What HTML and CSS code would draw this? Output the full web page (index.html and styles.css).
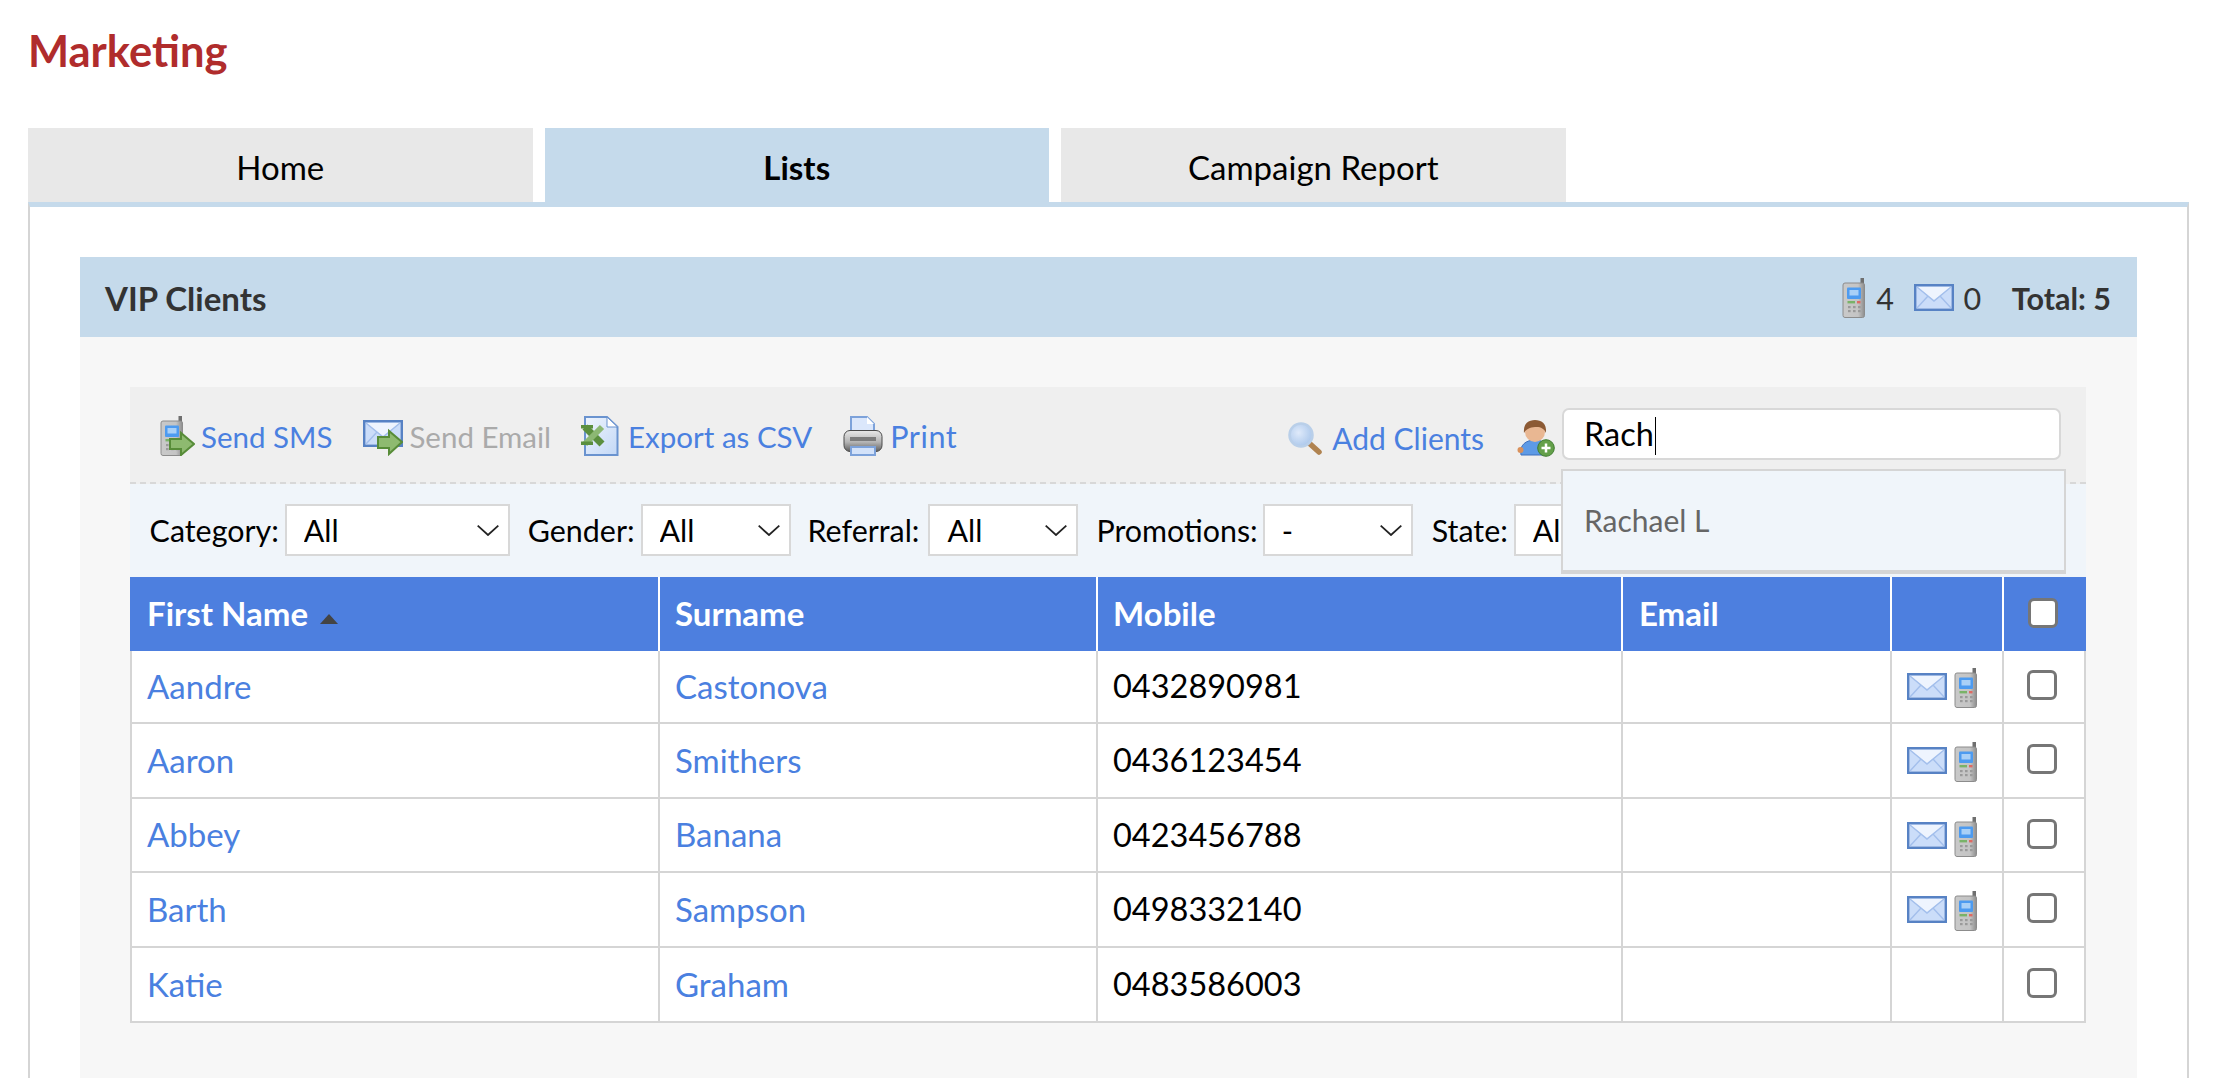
FILE: index.html
```html
<!DOCTYPE html>
<html lang="en">
<head>
<meta charset="utf-8">
<title>Marketing</title>
<link rel="stylesheet" href="styles.css">
</head>
<body>
<svg class="defs" xmlns="http://www.w3.org/2000/svg">
  <defs>
    <linearGradient id="g-phone" x1="0" y1="0" x2="1" y2="0"><stop offset="0" stop-color="#c9c9c9"/><stop offset=".7" stop-color="#c4c4c4"/><stop offset="1" stop-color="#8d8d8d"/></linearGradient>
    <linearGradient id="g-env" x1="0" y1="0" x2="0" y2="1"><stop offset="0" stop-color="#f0f5fe"/><stop offset="1" stop-color="#c6d9f8"/></linearGradient>
    <linearGradient id="g-page" x1="0" y1="0" x2="1" y2="1"><stop offset="0" stop-color="#eef4fd"/><stop offset="1" stop-color="#c3d8f6"/></linearGradient>
    <linearGradient id="g-printer" x1="0" y1="0" x2="0" y2="1"><stop offset="0" stop-color="#e8e8e8"/><stop offset=".55" stop-color="#b5b5b5"/><stop offset="1" stop-color="#5e5e5e"/></linearGradient>
    <radialGradient id="g-lens" cx=".4" cy=".4" r=".7"><stop offset="0" stop-color="#dfeafa"/><stop offset="1" stop-color="#a6c4ea"/></radialGradient>
    <symbol id="i-phone" viewBox="0 0 24 40">
      <rect x="18.5" y="0" width="3.5" height="12" fill="#6f6f6f"/>
      <rect x="1" y="5" width="21.5" height="34.5" rx="2" fill="url(#g-phone)" stroke="#8c8c8c"/>
      <rect x="5" y="9.5" width="14" height="11.5" rx="1" fill="#4d9bf0"/>
      <rect x="7.5" y="12" width="9" height="5.5" fill="#a9d0f7"/>
      <rect x="5.5" y="23" width="7.5" height="2.4" fill="#79b368"/>
      <rect x="15" y="23" width="3.5" height="2.4" fill="#df6a63"/>
      <g fill="#9a9a9a"><rect x="6" y="28" width="2.6" height="2.2"/><rect x="11" y="28" width="2.6" height="2.2"/><rect x="16" y="28" width="2.6" height="2.2"/><rect x="6" y="32" width="2.6" height="2.2"/><rect x="11" y="32" width="2.6" height="2.2"/><rect x="16" y="32" width="2.6" height="2.2"/></g>
    </symbol>
    <symbol id="i-env" viewBox="0 0 40 27">
      <rect x="1.2" y="1.200" width="37.600" height="24.600" fill="#cbddf9" stroke="#5782c4" stroke-width="2.400"/>
      <path d="M3 3H37L20 16Z" fill="#eef4fe"/>
      <path d="M3 3L20 17L37 3M3 24L14 12M37 24L26 12" fill="none" stroke="#a3bfec" stroke-width="1.400"/>
    </symbol>
    <symbol id="i-sms" viewBox="0 0 35 40">
      <use href="#i-phone" x="0" y="0" width="24" height="40"/>
      <path d="M10 23H21V17L34 28L21 39V33H10Z" fill="#8eba70" stroke="#578c38" stroke-width="2"/>
    </symbol>
    <symbol id="i-mail" viewBox="0 0 40 36">
      <use href="#i-env" x="0" y="0" width="40" height="27"/>
      <path d="M15 17H26V11L39 22L26 34V28H15Z" fill="#8eba70" stroke="#578c38" stroke-width="2"/>
    </symbol>
    <symbol id="i-xls" viewBox="0 0 38 40">
      <path d="M4 1H26L36.5 11V39H4Z" fill="url(#g-page)" stroke="#6a93cf" stroke-width="2"/>
      <path d="M26 1V11H36.5Z" fill="#fff" stroke="#6a93cf"/>
      <path d="M4 11L21 28" stroke="#5b8f3e" stroke-width="7"/>
      <path d="M21 11L4 28" stroke="#8cb873" stroke-width="6"/>
      <rect x="0" y="9" width="12" height="3.5" fill="#5b8f3e"/>
      <rect x="0" y="25.500" width="12" height="3.500" fill="#5b8f3e"/>
    </symbol>
    <symbol id="i-print" viewBox="0 0 40 40">
      <path d="M8 1H24L31 8V20H8Z" fill="#dbe7fb" stroke="#7da2da" stroke-width="2"/>
      <path d="M24 1V8H31Z" fill="#fff"/>
      <rect x="1" y="14.500" width="38" height="21" rx="6" fill="url(#g-printer)" stroke="#4a4a4a"/>
      <rect x="7" y="21" width="26" height="4" fill="#7c7c7c"/>
      <rect x="8" y="31" width="24" height="8" fill="#d3e2f9" stroke="#7da2da" stroke-width="2"/>
    </symbol>
    <symbol id="i-glass" viewBox="0 0 34 33">
      <path d="M21 21L31 30" stroke="#b08350" stroke-width="5.500" stroke-linecap="round"/>
      <circle cx="13" cy="13" r="11.500" fill="url(#g-lens)" stroke="#b9cfe9" stroke-width="2.500"/>
    </symbol>
    <symbol id="i-user" viewBox="0 0 38 37">
      <path d="M4 35C2 25 9 20 18 20S31 25 30 35Z" fill="#5d9ae6" stroke="#3f70bd"/>
      <circle cx="3.500" cy="30" r="3" fill="#d9915c"/>
      <circle cx="18" cy="12" r="10" fill="#e9b792"/>
      <path d="M7 13C6 3 12 0 18 0S30 3 29 13C27 8 23 6.500 18 7S9 9 7 13Z" fill="#8c5a34"/>
      <circle cx="29" cy="28" r="8.300" fill="#64a04a" stroke="#3f7c2e"/>
      <path d="M29 23.500V32.500M24.500 28H33.500" stroke="#fff" stroke-width="2.500"/>
    </symbol>
    <symbol id="i-chev" viewBox="0 0 22 11">
      <path d="M.7 .7L11 10L21.300 .7" fill="none" stroke="#222" stroke-width="1.800"/>
    </symbol>
  </defs>
</svg>

<h1 class="page-title">Marketing</h1>

<nav class="tabs">
  <a class="tab">Home</a>
  <a class="tab tab-active">Lists</a>
  <a class="tab">Campaign Report</a>
</nav>

<main class="frame">
  <section class="panel">
    <header class="panel-head">
      <span class="panel-title">VIP Clients</span>
      <div class="counts">
        <svg class="ic ic-phone ic-count"><use href="#i-phone"/></svg><span class="count">4</span>
        <svg class="ic ic-env ic-count"><use href="#i-env"/></svg><span class="count">0</span>
        <strong class="total">Total: 5</strong>
      </div>
    </header>
    <div class="panel-body">
      <div class="toolbar">
        <div class="actions">
          <a class="action act-sms"><svg class="ic ic-sms"><use href="#i-sms"/></svg>Send SMS</a>
          <a class="action act-mail disabled"><svg class="ic ic-mail"><use href="#i-mail"/></svg>Send Email</a>
          <a class="action act-xls"><svg class="ic ic-xls"><use href="#i-xls"/></svg>Export as CSV</a>
          <a class="action act-print"><svg class="ic ic-print"><use href="#i-print"/></svg>Print</a>
        </div>
        <div class="search-tools">
          <a class="action act-add"><svg class="ic ic-glass"><use href="#i-glass"/></svg>Add Clients</a>
          <svg class="ic ic-user"><use href="#i-user"/></svg>
          <div class="search">
            <div class="search-input">Rach<span class="caret"></span></div>
            <div class="suggest"><span class="suggest-item">Rachael L</span></div>
          </div>
        </div>
      </div>

      <div class="filters">
        <label class="filter f-category">Category:<span class="sel sel-wide"><select><option>All</option></select><svg class="chev"><use href="#i-chev"/></svg></span></label>
        <label class="filter f-gender">Gender:<span class="sel"><select><option>All</option></select><svg class="chev"><use href="#i-chev"/></svg></span></label>
        <label class="filter f-referral">Referral:<span class="sel"><select><option>All</option></select><svg class="chev"><use href="#i-chev"/></svg></span></label>
        <label class="filter f-promo">Promotions:<span class="sel"><select><option>-</option></select><svg class="chev"><use href="#i-chev"/></svg></span></label>
        <label class="filter">State:<span class="sel"><select><option>All</option></select><svg class="chev"><use href="#i-chev"/></svg></span></label>
      </div>

      <table class="clients">
        <colgroup>
          <col class="c-first"><col class="c-sur"><col class="c-mob"><col class="c-mail"><col class="c-ico"><col class="c-chk">
        </colgroup>
        <thead>
          <tr>
            <th>First Name<span class="sort"></span></th>
            <th>Surname</th>
            <th>Mobile</th>
            <th class="th-email">Email</th>
            <th></th>
            <th class="chk"><input type="checkbox" class="box" aria-label="Select all"></th>
          </tr>
        </thead>
        <tbody>
          <tr>
            <td><a>Aandre</a></td><td><a>Castonova</a></td><td>0432890981</td><td></td>
            <td class="ico"><svg class="ic ic-env"><use href="#i-env"/></svg><svg class="ic ic-phone"><use href="#i-phone"/></svg></td>
            <td class="chk"><input type="checkbox" class="box" aria-label="Select"></td>
          </tr>
          <tr>
            <td><a>Aaron</a></td><td><a>Smithers</a></td><td>0436123454</td><td></td>
            <td class="ico"><svg class="ic ic-env"><use href="#i-env"/></svg><svg class="ic ic-phone"><use href="#i-phone"/></svg></td>
            <td class="chk"><input type="checkbox" class="box" aria-label="Select"></td>
          </tr>
          <tr>
            <td><a>Abbey</a></td><td><a>Banana</a></td><td>0423456788</td><td></td>
            <td class="ico"><svg class="ic ic-env"><use href="#i-env"/></svg><svg class="ic ic-phone"><use href="#i-phone"/></svg></td>
            <td class="chk"><input type="checkbox" class="box" aria-label="Select"></td>
          </tr>
          <tr>
            <td><a>Barth</a></td><td><a>Sampson</a></td><td>0498332140</td><td></td>
            <td class="ico"><svg class="ic ic-env"><use href="#i-env"/></svg><svg class="ic ic-phone"><use href="#i-phone"/></svg></td>
            <td class="chk"><input type="checkbox" class="box" aria-label="Select"></td>
          </tr>
          <tr>
            <td><a>Katie</a></td><td><a>Graham</a></td><td>0483586003</td><td></td>
            <td class="ico"></td>
            <td class="chk"><input type="checkbox" class="box" aria-label="Select"></td>
          </tr>
        </tbody>
      </table>
    </div>
  </section>
</main>
</body>
</html>
```

FILE: styles.css
```css
* { box-sizing: border-box; }
html, body { margin: 0; height: 100%; }
body {
  display: flex;
  flex-direction: column;
  height: 1078px;
  overflow: hidden;
  padding: 0 39px 0 28px;
  background: #fff;
  color: #000;
  font-family: Lato, "Open Sans", sans-serif;
  font-size: 33px;
}
.defs { display: block; width: 0; height: 0; overflow: hidden; }

.page-title {
  margin: 0 0 54px;
  padding-top: 26px;
  font-size: 43.500px;
  line-height: 48px;
  font-weight: 700;
  color: #b02c2c;
}

.tabs { display: flex; }
.tab {
  width: 504.500px;
  height: 74px;
  margin-right: 12px;
  padding-top: 5px;
  background: #e8e8e8;
  line-height: 69px;
  text-align: center;
}
.tab-active { background: #c5daeb; font-weight: 700; }

.frame {
  flex: 1;
  min-height: 0;
  padding: 50px 50px 0;
  border-top: 5px solid #c5daeb;
  border-left: 2px solid #d5d5d5;
  border-right: 2px solid #d5d5d5;
}
.panel { height: 100%; background: #f7f7f7; }
.panel-head {
  display: flex;
  align-items: center;
  justify-content: space-between;
  height: 80px;
  padding: 1px 26px 0 25px;
  background: #c5daeb;
  color: #333;
}
.panel-title { font-weight: 700; }
.counts { display: flex; align-items: center; font-size: 30.500px; }
.count { margin: 0 0 0 10px; }
.ic-env.ic-count { margin-left: 19.600px; }
.total { margin-left: 30.500px; font-weight: 700; }

.ic { display: block; flex: none; filter: blur(.5px); }
.ic-phone { width: 24px; height: 40px; }
.ic-env { width: 40px; height: 27px; }
.ic-sms { width: 35px; height: 40px; }
.ic-mail { width: 40px; height: 36px; }
.ic-xls { width: 38px; height: 40px; }
.ic-print { width: 40px; height: 40px; }
.ic-glass { width: 34px; height: 33px; }
.ic-user { width: 38px; height: 37px; margin: 12px 7px 0 33px; }

.panel-body { padding: 50px 51px 0 50px; }

.toolbar {
  display: flex;
  justify-content: space-between;
  align-items: flex-start;
  height: 97px;
  background: #efefef;
  border-bottom: 2px dashed #d8d8d8;
}
.actions { display: flex; padding: 29px 0 0 30px; font-size: 29.500px; }
.action {
  display: flex;
  align-items: center;
  height: 40px;
  color: #4a80e0;
}
.action .ic { margin-right: 6px; }
.act-sms { margin-right: 31px; }
.act-mail { margin-right: 30px; }
.act-xls { margin-right: 31px; }
.act-mail .ic { margin: 0 6px 0 0; align-self: flex-end; }
.act-xls .ic { margin-right: 9px; }
.act-print { font-size: 30.500px; letter-spacing: .6px; }
.act-print .ic { margin-right: 7px; }
.disabled { color: #aaa; }
.act-add { margin-top: 10px; font-size: 30px; }
.act-add .ic { margin-right: 10px; }

.search-tools { display: flex; align-items: flex-start; padding: 21px 25px 0 0; }
.search { position: relative; }
.search-input {
  width: 499px;
  height: 52px;
  padding-left: 20px;
  background: #fff;
  border: 2px solid #d8d8d8;
  border-radius: 7px;
  line-height: 48px;
  font-size: 32.500px;
  color: #000;
}
.caret {
  display: inline-block;
  width: 1px;
  height: 38px;
  margin-left: 1px;
  background: #000;
  vertical-align: -9px;
}
.suggest {
  position: absolute;
  top: 61px;
  left: -1px;
  z-index: 5;
  width: 505px;
  height: 105px;
  padding: 34px 0 0 21px;
  background: #f0f5fa;
  border: 2px solid #d5d5d5;
  border-bottom-width: 4px;
  font-size: 30px;
  line-height: 30px;
  color: #666;
}

.filters {
  display: flex;
  align-items: flex-start;
  height: 93px;
  padding: 20px 0 0 19.600px;
  background: #f0f5fa;
  overflow: hidden;
  font-size: 30.400px;
}
.filter { display: flex; align-items: center; height: 52px; margin-right: 19px; color: #000; }
.sel { position: relative; display: block; width: 150px; height: 52px; margin-left: 6px; }
.sel-wide { width: 225px; }
.f-category { margin-right: 18px; }
.f-gender { margin-right: 17px; }
.f-referral { margin-right: 18px; }
.f-referral .sel { margin-left: 9px; }
.f-promo .sel { margin-left: 5px; }
.sel select {
  display: block;
  width: 100%;
  height: 100%;
  padding: 0 0 0 17px;
  appearance: none;
  -webkit-appearance: none;
  background: #fff;
  border: 2px solid #d8d8d8;
  border-radius: 0;
  font: inherit;
  color: #000;
}
.chev { position: absolute; top: 21px; right: 11px; width: 22px; height: 11px; pointer-events: none; }

.clients {
  width: 1956px;
  table-layout: fixed;
  border-collapse: separate;
  border-spacing: 0;
  background: #fff;
}
.c-first { width: 530px; }
.c-sur { width: 438px; }
.c-mob { width: 525px; }
.c-mail { width: 269px; }
.c-ico { width: 112px; }
.c-chk { width: 82px; }

.clients th {
  height: 74px;
  padding: 0 0 3px 15px;
  background: #4d7fdf;
  border-right: 2px solid #fff;
  color: #fff;
  font-weight: 700;
  text-align: left;
}
.clients th:first-child { padding-left: 17px; }
.clients th:last-child { border-right: 0; }
.clients .th-email { padding-left: 16px; }
.sort {
  display: inline-block;
  width: 0;
  height: 0;
  margin-left: 12px;
  border-left: 9.500px solid transparent;
  border-right: 9.500px solid transparent;
  border-bottom: 10px solid #444;
  vertical-align: 2px;
}
.clients td {
  height: 75px;
  padding: 0 0 2px 15px;
  border-right: 2px solid #d5d5d5;
  border-bottom: 2px solid #d5d5d5;
  font-size: 32.500px;
}
.clients tbody tr:first-child td { height: 73px; }
.clients tbody tr:nth-child(3) td { height: 74px; }
.clients td:first-child { padding-left: 15px; border-left: 2px solid #d5d5d5; }
.clients td a { color: #4a80e0; font-size: 33px; }
.clients .chk { padding: 0 4px 0 0; text-align: center; }
.clients .ico { padding: 0 0 0 15px; }
.ico .ic { display: inline-block; vertical-align: middle; }
.ico .ic-env { margin: 0 7px 3px 0; }

.box {
  display: block;
  width: 30px;
  height: 30px;
  margin: -3px auto 0;
  appearance: none;
  -webkit-appearance: none;
  background: #fff;
  border: 3px solid #767676;
  border-radius: 6px;
}
```
